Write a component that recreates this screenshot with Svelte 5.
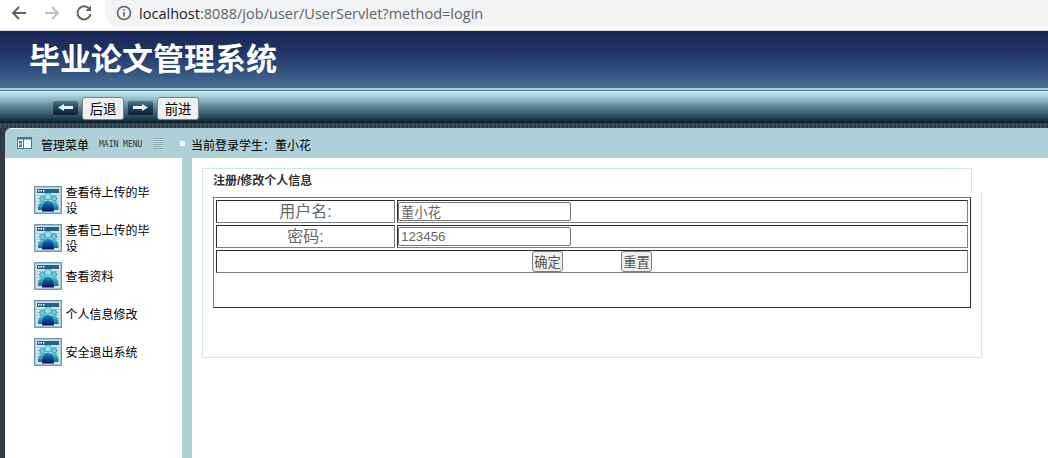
<script lang="ts">
	const menu = [
		'查看待上传的毕设',
		'查看已上传的毕设',
		'查看资料',
		'个人信息修改',
		'安全退出系统'
	];
</script>

<div class="page">
	<div class="chrome">
		<div class="chrome__nav">
			<svg width="18" height="16" viewBox="0 0 18 16" class="back"><path d="M16 8H3M9 2 3 8l6 6" fill="none" stroke="#5f6368" stroke-width="2"/></svg>
			<svg width="18" height="16" viewBox="0 0 18 16" class="forward"><path d="M2 8h13M9 2l6 6-6 6" fill="none" stroke="#bdc1c6" stroke-width="2"/></svg>
			<svg width="18" height="18" viewBox="0 0 18 18" class="reload"><path d="M14.500 5A6.600 6.600 0 1 0 15.600 10" fill="none" stroke="#5f6368" stroke-width="2"/><path d="M16 1.500V7h-5.500z" fill="#5f6368"/></svg>
		</div>
		<div class="chrome__url">
			<svg width="16" height="16" viewBox="0 0 16 16"><circle cx="8" cy="8" r="6.500" fill="none" stroke="#5f6368" stroke-width="1.600"/><path d="M8 7v4.500M8 4.200v1.600" stroke="#5f6368" stroke-width="1.600"/></svg>
			<span class="url__host">localhost</span><span class="url__rest">:8088/job/user/UserServlet?method=login</span>
		</div>
	</div>

	<header class="banner">
		<h1>毕业论文管理系统</h1>
	</header>

	<div class="toolbar">
		<svg class="arrow" width="25" height="14" viewBox="0 0 25 14">
			<use href="#arrow-bg" />
			<path d="M5 6.500 11 3v2h9v3h-9v2z" fill="#e6f3f7" />
		</svg>
		<button type="button" class="toolbar__btn">后退</button>
		<svg class="arrow" width="25" height="14" viewBox="0 0 25 14">
			<use href="#arrow-bg" />
			<path d="M20 6.500 14 3v2H5v3h9v2z" fill="#e6f3f7" />
		</svg>
		<button type="button" class="toolbar__btn">前进</button>
	</div>

	<svg width="0" height="0" class="defs">
		<defs>
			<linearGradient id="arrow-fill" x1="0" y1="0" x2="0" y2="1">
				<stop offset="0" stop-color="#4f7a92" />
				<stop offset="0.45" stop-color="#1f465f" />
				<stop offset="1" stop-color="#08202f" />
			</linearGradient>
			<linearGradient id="body-front" x1="0" y1="0" x2="0" y2="1">
				<stop offset="0" stop-color="#1f9fc0" />
				<stop offset="0.45" stop-color="#0b4f9c" />
				<stop offset="1" stop-color="#04125e" />
			</linearGradient>
			<linearGradient id="body-side" x1="0" y1="0" x2="0" y2="1">
				<stop offset="0" stop-color="#49c4d2" />
				<stop offset="1" stop-color="#0b6f98" />
			</linearGradient>
			<rect id="arrow-bg" width="25" height="14" rx="2" fill="url(#arrow-fill)" />
			<g id="user-icon">
				<rect x="0.500" y="0.500" width="27" height="27" fill="#d5e3ea" stroke="#6c9ab5" />
				<rect x="1.500" y="1.500" width="25" height="25" fill="none" stroke="#a9c5d4" />
				<rect x="3" y="3" width="22" height="4" fill="#1f6486" />
				<path d="M4 4h1.500v1.500H4zM6.500 4H8v1.500H6.500zM9 4h1.500v1.500H9z" fill="#fff" />
				<path d="M3 9.500h22M3 12.500h22M3 15.500h22M3 18.500h22M3 21.500h22" stroke="#a9c3d2" stroke-width="1" />
				<circle cx="20" cy="12.500" r="2.800" fill="#63cfd9" stroke="#1b7fa3" stroke-width="0.600" />
				<path d="M16 24c0-5.500 1-8.500 4-8.500s4.500 3 4.500 8.500z" fill="url(#body-side)" />
				<circle cx="8.500" cy="13" r="2.800" fill="#63cfd9" stroke="#1b7fa3" stroke-width="0.600" />
				<path d="M4 24c0-5.500 1.500-8 4.500-8s4 2.500 4 8z" fill="url(#body-side)" />
				<circle cx="14" cy="10.500" r="3.500" fill="#8fe3e8" stroke="#1b7fa3" stroke-width="0.600" />
				<path d="M8 25.500c0-7 2-11 6-11s6 4 6 11z" fill="url(#body-front)" />
			</g>
		</defs>
	</svg>

	<div class="strip"></div>

	<div class="shell">
		<div class="shell__head">
			<div class="head__menu">
				<svg width="15" height="12" viewBox="0 0 15 12">
					<rect x="0.500" y="0.500" width="14" height="11" fill="#f3f8fa" stroke="#3f7f92" />
					<rect x="1" y="1" width="13" height="1.500" fill="#3f7f92" />
					<path d="M2 4h3v2.500H2zM2 7.500h3V10H2z" fill="#3f7f92" />
					<path d="M6.500 2v9" stroke="#3f7f92" />
				</svg>
				<span class="head__title">管理菜单</span>
				<span class="head__en">MAIN MENU</span>
				<span class="head__lines"></span>
			</div>
			<div class="head__user">
				<span class="head__dot"></span>
				<span class="head__name">当前登录学生：董小花</span>
			</div>
		</div>

		<div class="shell__body">
			<aside class="sidebar">
				{#each menu as item}
					<div class="menu-item">
						<svg width="28" height="28" viewBox="0 0 28 28"><use href="#user-icon" /></svg>
						<span>{item}</span>
					</div>
				{/each}
			</aside>
			<div class="divider"></div>
			<main class="content">
				<div class="tab">注册/修改个人信息</div>
				<div class="panel">
					<table>
						<tbody>
							<tr>
								<td class="label">用户名:</td>
								<td class="field"><input value="董小花" /></td>
							</tr>
							<tr>
								<td class="label">密码:</td>
								<td class="field"><input value="123456" /></td>
							</tr>
							<tr>
								<td colspan="2" class="actions">
									<div class="actions__row">
										<button type="button">确定</button>
										<button type="button">重置</button>
									</div>
								</td>
							</tr>
							<tr class="spacer"><th colspan="2"></th></tr>
						</tbody>
					</table>
				</div>
			</main>
		</div>
	</div>
</div>

<style>
	:global(body) {
		margin: 0;
		background: #fff;
	}

	.page {
		width: 1048px;
		height: 458px;
		overflow: hidden;
		display: flex;
		flex-direction: column;
		background: #323b44;
		font-family: 'Liberation Sans', 'Noto Sans CJK SC', sans-serif;
		font-size: 12px;
		color: #000;
	}

	.defs {
		display: block;
		height: 0;
	}

	.chrome {
		height: 31px;
		flex: none;
		display: flex;
		box-sizing: border-box;
		background: #fff;
		border-bottom: 1px solid #d6d8da;
	}

	.chrome__nav {
		width: 105px;
		flex: none;
		display: flex;
		align-items: center;
		height: 26px;
		padding-left: 10px;
		box-sizing: border-box;
	}

	.forward {
		margin-left: 15px;
	}

	.reload {
		margin-left: 14px;
	}

	.chrome__url {
		flex: 1;
		height: 26px;
		display: flex;
		align-items: center;
		padding-left: 11px;
		background: #f1f3f4;
		border-radius: 0 0 0 13px;
		font-family: 'Open Sans', sans-serif;
		font-size: 14.55px;
	}

	.chrome__url svg {
		margin-right: 7px;
	}

	.url__host {
		color: #202124;
	}

	.url__rest {
		color: #5f6368;
	}

	.banner {
		height: 57px;
		flex: none;
		display: flex;
		align-items: center;
		padding-left: 29px;
		box-sizing: border-box;
		background: linear-gradient(#1a2958 0%, #1f3061 30%, #33527f 70%, #4a7098 100%);
	}

	.banner h1 {
		margin: 0;
		font-size: 31px;
		font-weight: 700;
		color: #fff;
		line-height: 1;
	}

	.toolbar {
		height: 35px;
		flex: none;
		display: flex;
		align-items: center;
		padding: 3px 0 0 53px;
		box-sizing: border-box;
		border-top: 2px solid #a6cbd6;
		background: linear-gradient(#54778a 0, #54778a 1px, #c4eef5 1px, #a9d1dc 18%, #5f8696 50%, #24495e 82%, #0a2433 96%, #06151f 100%);
	}

	.arrow {
		flex: none;
	}

	.toolbar__btn {
		width: 42px;
		height: 23px;
		padding: 0;
		margin: 0 4px;
		box-sizing: border-box;
		border: 1px solid #808080;
		border-radius: 3px;
		background: #efefef;
		font: inherit;
		font-size: 13.33px;
		color: #000;
	}

	.strip {
		height: 5px;
		flex: none;
		background: repeating-linear-gradient(90deg, #3f4d5a 0 2px, #2e3a45 2px 4px);
	}

	.shell {
		flex: 1;
		margin-left: 5px;
		display: flex;
		flex-direction: column;
		background:
			linear-gradient(90deg, #fff, #aed1d9 40px) top / 100% 1px no-repeat,
			#aed1d9;
		border-radius: 6px 0 0 0;
		overflow: hidden;
	}

	.shell__head {
		height: 30px;
		flex: none;
		display: flex;
		align-items: center;
	}

	.head__menu {
		width: 175px;
		flex: none;
		display: flex;
		align-items: center;
		padding-left: 12px;
		box-sizing: border-box;
	}

	.head__title {
		margin-left: 9px;
		padding-top: 2px;
	}

	.head__en {
		margin-left: 10px;
		padding-top: 3px;
		font-family: 'DejaVu Sans Mono', monospace;
		font-size: 8px;
		color: #333;
	}

	.head__lines {
		width: 10px;
		height: 11px;
		margin-left: 11px;
		background: repeating-linear-gradient(#93a6ad 0 1px, #c8dde2 1px 2px);
	}

	.head__user {
		display: flex;
		align-items: center;
		gap: 6px;
	}

	.head__name {
		padding-top: 2px;
	}

	.head__dot {
		width: 5px;
		height: 5px;
		background: #fff;
	}

	.shell__body {
		flex: 1;
		display: flex;
		min-height: 0;
	}

	.sidebar {
		width: 177px;
		flex: none;
		padding: 23px 0 0 29px;
		box-sizing: border-box;
		background: #fff;
	}

	.menu-item {
		width: 122px;
		height: 38px;
		display: flex;
		align-items: center;
		gap: 3.500px;
		line-height: 16px;
	}

	.menu-item svg {
		flex: none;
	}

	.menu-item span {
		padding-top: 1px;
	}

	.divider {
		width: 10px;
		flex: none;
		background: #aed1d9;
	}

	.content {
		flex: 1;
		padding: 10px 0 0 10px;
		background: #fff;
	}

	.tab {
		width: 770px;
		height: 24px;
		padding-left: 10px;
		box-sizing: border-box;
		border: 1px solid #cde6ec;
		border-bottom: 0;
		font-size: 12px;
		font-weight: 700;
		line-height: 25px;
		color: #333;
	}

	.panel {
		width: 780px;
		height: 166px;
		padding: 5px 0 0 10px;
		box-sizing: border-box;
		border: 1px solid #cde6ec;
		border-top: 0;
	}

	table {
		width: 758px;
		border-collapse: separate;
		border-spacing: 2px;
		border: 1px solid;
		border-color: #808080 #2c2c2c #2c2c2c #808080;
		table-layout: fixed;
	}

	td {
		height: 23px;
		padding: 0;
		box-sizing: border-box;
		border: 1px solid;
		border-color: #2c2c2c #808080 #808080 #2c2c2c;
		color: #666;
	}

	.label {
		width: 179px;
		text-align: center;
		font-size: 16px;
		line-height: 20px;
	}

	.field {
		line-height: 0;
	}

	input {
		width: 173px;
		height: 19px;
		margin: 0;
		padding: 0 2px 1px;
		box-sizing: border-box;
		border: 1px solid #767676;
		border-radius: 2px;
		background: #fff;
		font: inherit;
		font-size: 13.33px;
		color: #666;
		vertical-align: top;
	}

	.actions__row {
		display: flex;
		justify-content: center;
		gap: 58px;
	}

	.actions button {
		width: 31px;
		height: 21px;
		padding: 0;
		box-sizing: border-box;
		border: 1px solid #808080;
		border-radius: 3px;
		background: #efefef;
		font: inherit;
		font-size: 13.33px;
		color: #555;
	}

	.spacer th {
		height: 30px;
		padding: 0;
	}
</style>
